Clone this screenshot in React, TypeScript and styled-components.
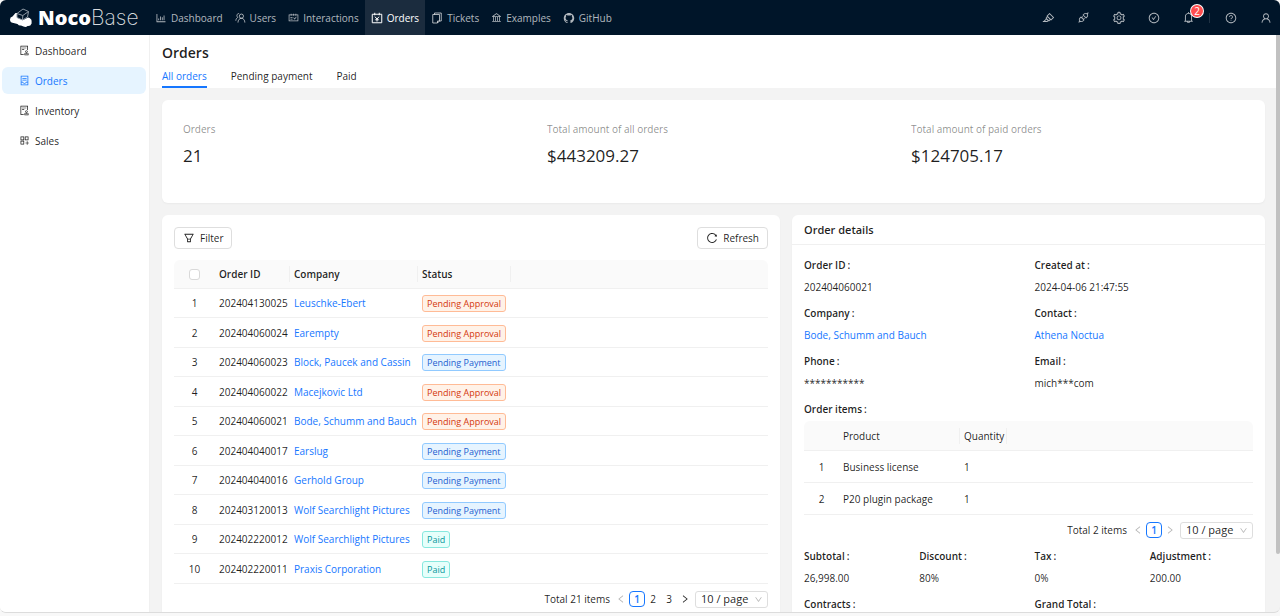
import React from 'react';
import styled, { createGlobalStyle, css } from 'styled-components';
import {
  AiOutlineBarChart,
  AiOutlineSchedule,
  AiOutlineBank,
  AiOutlineGithub,
  AiOutlineSetting,
  AiOutlineCheckCircle,
  AiOutlineBell,
  AiOutlineQuestionCircle,
  AiOutlineUser,
  AiOutlineHighlight,
  AiOutlineApi,
  AiOutlineFilter,
  AiOutlineReload,
  AiOutlineLeft,
  AiOutlineRight,
  AiOutlineDown,
  AiOutlineAudit,
  AiOutlineContainer,
  AiOutlineAppstoreAdd,
} from 'react-icons/ai';

const color = {
  navy: '#001529',
  blue: '#1677ff',
  text: 'rgba(0, 0, 0, 0.88)',
  muted: 'rgba(0, 0, 0, 0.45)',
  line: '#f0f0f0',
  border: '#dedede',
  page: '#f3f3f3',
  head: '#fafafa',
};

const GlobalStyle = createGlobalStyle`
  * { box-sizing: border-box; }
  body {
    margin: 0;
    background: #f8f8f8;
    color: ${color.text};
    font: 10px/18px "Open Sans", "Noto Sans", sans-serif;
  }
  button, select, input { font: inherit; color: inherit; }
  a { color: ${color.blue}; text-decoration: none; }
`;

const Window = styled.div`
  display: flex;
  flex-direction: column;
  height: calc(100vh - 3px);
  overflow: hidden;
  background: ${color.page};
  border-bottom: 1px solid #dcdcdc;
  border-radius: 6px;
`;

const TopBar = styled.header`
  flex: none;
  display: flex;
  align-items: stretch;
  height: 35px;
  background: ${color.navy};
`;

const Logo = styled.a`
  display: flex;
  align-items: center;
  gap: 5px;
  width: 149px;
  padding-left: 9px;
  color: #fff;
  font: 800 20px/24px "Open Sans", sans-serif;
  svg { flex: none; }
`;

const LogoThin = styled.span`
  font-family: Inter, "Open Sans", sans-serif;
  font-size: 21px;
  font-weight: 200;
  color: rgba(255, 255, 255, 0.85);
`;

const TopNav = styled.nav`
  display: flex;
`;

const TopLink = styled.a<{ $active?: boolean }>`
  display: flex;
  align-items: center;
  gap: 4px;
  padding: 0 6px;
  color: ${(p) => (p.$active ? '#fff' : 'rgba(255, 255, 255, 0.7)')};
  background: ${(p) => (p.$active ? '#1b2c3e' : 'transparent')};
`;

const Tools = styled.div`
  display: flex;
  align-items: center;
  gap: 6px;
  margin-left: auto;
`;

const ToolButton = styled.button`
  position: relative;
  display: grid;
  place-items: center;
  width: 29px;
  height: 24px;
  padding: 0;
  border: 0;
  background: none;
  color: rgba(255, 255, 255, 0.7);
`;

const ToolRule = styled.span`
  width: 1px;
  height: 10px;
  background: rgba(255, 255, 255, 0.12);
`;

const Count = styled.span`
  position: absolute;
  top: -1px;
  right: 0;
  width: 12px;
  height: 12px;
  border-radius: 6px;
  background: #ff4d4f;
  box-shadow: 0 0 0 1px #fff;
  color: #fff;
  line-height: 12px;
  text-align: center;
`;

const Body = styled.div`
  position: relative;
  flex: 1;
  display: flex;
  min-height: 0;
`;

const Side = styled.nav`
  flex: none;
  display: flex;
  flex-direction: column;
  gap: 3px;
  width: 149px;
  padding: 2px 3px 0 2px;
  background: #fff;
`;

const SideLink = styled.a<{ $active?: boolean }>`
  display: flex;
  align-items: center;
  gap: 5px;
  height: 27px;
  padding-left: 17px;
  border-radius: 6px;
  color: ${(p) => (p.$active ? color.blue : color.text)};
  background: ${(p) => (p.$active ? '#e6f4ff' : 'transparent')};
`;

const SalesIcon = styled(AiOutlineAppstoreAdd)`
  transform: scaleX(-1);
`;

const Main = styled.main`
  flex: 1;
  min-width: 0;
  overflow: hidden;
  border-left: 1px solid ${color.line};
`;

const ScrollThumb = styled.div`
  position: absolute;
  top: 0;
  right: 0;
  width: 4px;
  height: 90%;
  border-radius: 0 0 3px 3px;
  background: #c1c1c1;
`;

const PageHead = styled.div`
  padding: 6px 12px 0;
  background: #fff;
`;

const Title = styled.h1`
  margin: 0;
  font-size: 14px;
  line-height: 23px;
  font-weight: 600;
`;

const Tabs = styled.div`
  display: flex;
  gap: 24px;
`;

const Tab = styled.button<{ $active?: boolean }>`
  height: 24px;
  padding: 2px 0 0;
  border: 0;
  border-bottom: 2px solid ${(p) => (p.$active ? color.blue : 'transparent')};
  background: none;
  color: ${(p) => (p.$active ? color.blue : color.text)};
`;

const Content = styled.div`
  display: flex;
  flex-direction: column;
  gap: 12px;
  padding: 12px 15px 12px 12px;
`;

const Card = styled.section`
  border-radius: 6px;
  background: #fff;
  box-shadow: 0 1px 2px rgba(0, 0, 0, 0.04);
`;

const Stats = styled(Card)`
  display: grid;
  grid-template-columns: repeat(3, 1fr);
  gap: 10px;
  height: 103px;
  padding: 20px 0 0 21px;
`;

const StatLabel = styled.div`
  color: ${color.muted};
`;

const StatValue = styled.div`
  margin-top: 3px;
  font-size: 17px;
  line-height: 30px;
`;

const Columns = styled.div`
  display: grid;
  grid-template-columns: 618fr 473fr;
  align-items: start;
  gap: 12px;
`;

const ListCard = styled(Card)`
  padding: 12px;
`;

const Actions = styled.div`
  display: flex;
  justify-content: space-between;
  margin-bottom: 11px;
`;

const ActionButton = styled.button`
  display: flex;
  align-items: center;
  gap: 5px;
  height: 22px;
  padding: 0 8px;
  border: 1px solid ${color.border};
  border-radius: 4px;
  background: #fff;
`;

const DataTable = styled.table<{ $head: number; $odd: number; $even: number }>`
  width: 100%;
  border-collapse: separate;
  border-spacing: 0;
  table-layout: fixed;
  th, td {
    height: ${(p) => p.$odd}px;
    padding: 0 0 0 4px;
    border-bottom: 1px solid ${color.line};
    text-align: left;
    white-space: nowrap;
  }
  tr:nth-child(even) td { height: ${(p) => p.$even}px; }
  th { height: ${(p) => p.$head}px; background: ${color.head}; }
  th:first-child { border-top-left-radius: 6px; }
  th:last-child { border-top-right-radius: 6px; }
  th:first-child, td:first-child { padding: 0; text-align: center; }
`;

const HeadCell = styled.th<{ $width?: number; $rule?: boolean; $plain?: boolean }>`
  ${(p) => p.$width && css`width: ${p.$width}px;`}
  font-weight: ${(p) => (p.$plain ? 400 : 600)};
  ${(p) =>
    p.$rule &&
    css`
      background: linear-gradient(${color.line}, ${color.line}) right center / 1px 16px no-repeat ${color.head} !important;
    `}
`;

const Check = styled.input`
  display: block;
  appearance: none;
  width: 11px;
  height: 11px;
  margin: 0 auto;
  border: 1px solid #d9d9d9;
  border-radius: 3px;
  background: #fff;
`;

const tones = {
  'Pending Approval': ['#d4380d', '#fff2e8', '#ffbb96'],
  'Pending Payment': ['#1d5fd0', '#e6f4ff', '#91caff'],
  Paid: ['#08979c', '#e6fffb', '#87e8de'],
};
type Status = keyof typeof tones;

const Tag = styled.span<{ $status: Status }>`
  display: inline-block;
  padding: 0 4px;
  border: 1px solid ${(p) => tones[p.$status][2]};
  border-radius: 3px;
  background: ${(p) => tones[p.$status][1]};
  color: ${(p) => tones[p.$status][0]};
  font-size: 9px;
  line-height: 15px;
  vertical-align: middle;
`;

const Pager = styled.div`
  display: flex;
  align-items: center;
  justify-content: flex-end;
  height: 18px;
  margin-top: 6px;
`;

const PagerTotal = styled.span`
  margin-right: 3px;
`;

const PageButton = styled.button<{ $active?: boolean }>`
  display: grid;
  place-items: center;
  width: 16px;
  height: 16px;
  padding: 0;
  border: 1px solid ${(p) => (p.$active ? color.blue : 'transparent')};
  border-radius: 4px;
  background: none;
  color: ${(p) => (p.$active ? color.blue : color.text)};
  font-weight: ${(p) => (p.$active ? 600 : 400)};
  line-height: 14px;
  &:disabled { color: rgba(0, 0, 0, 0.3); }
`;

const SizeWrap = styled.label`
  display: grid;
  align-items: center;
  width: 73px;
  margin-left: 2px;
  svg {
    grid-area: 1 / 1;
    justify-self: end;
    margin-right: 5px;
    color: rgba(0, 0, 0, 0.3);
    pointer-events: none;
  }
`;

const SizeSelect = styled.select`
  grid-area: 1 / 1;
  appearance: none;
  width: 100%;
  height: 17px;
  padding: 0 5px 1px;
  border: 1px solid ${color.border};
  border-radius: 3px;
  background: #fff;
  font-size: 11px;
  line-height: 14px;
`;

const DetailTitle = styled.h2`
  margin: 0;
  padding: 0 12px;
  border-bottom: 1px solid ${color.line};
  font-size: 11px;
  line-height: 29px;
  font-weight: 600;
`;

const DetailBody = styled.div`
  display: flex;
  flex-direction: column;
  padding: 9px 12px 12px;
`;

const FieldGrid = styled.dl<{ $columns: number }>`
  display: grid;
  grid-template-columns: repeat(${(p) => p.$columns}, 1fr);
  column-gap: 12px;
  margin: 0;
`;

const FieldBox = styled.div`
  height: 48px;
  dt { line-height: 22px; font-weight: 600; }
  dd { margin: 0; line-height: 22px; }
`;

const Colon = styled.span`
  margin-left: 2px;
`;

const ItemsLabel = styled.h3`
  margin: 0;
  font-size: 10px;
  line-height: 23px;
  font-weight: 600;
`;

const ItemsPager = styled.div`
  margin-bottom: 6px;
`;

function LogoMark() {
  return (
    <svg width="24" height="20" viewBox="0 0 24 20">
      <path
        d="M1 11.5 Q1 9 3.5 8.5 L6.5 5 L8.5 5 L8 9.5 L14 12 L19 9.5 Q22.6 10.5 22.6 13 L22.6 15.5 Q21.5 18.5 18.5 18 Q17 19.5 14.5 18.5 L12 17.5 Q10 18 8.5 16 L2.5 14.5 Q0.8 13.5 1 11.5 Z"
        fill="#fff"
      />
      <path
        d="M8 5.5 L14 1 L19.5 3.5 L18.5 9 L13.5 12 L8 9.5 Z M8 5.5 L13.8 7.5 L19.5 3.5 M13.8 7.5 L13.5 12"
        fill="#001529"
        stroke="#8d98a3"
        strokeWidth="1"
        strokeLinejoin="round"
      />
    </svg>
  );
}

function UsersIcon() {
  return (
    <svg width="11" height="12" viewBox="0 0 24 24" fill="none" stroke="currentColor" strokeWidth="1.9">
      <circle cx="14" cy="8" r="4.6" />
      <path d="M6.5 22c0-5.5 3.2-9.4 7.5-9.4s7.5 3.9 7.5 9.4M9 2.2C4.5 2 2.5 7 6 10.8M6 10.8C3.5 12 2 14.5 1.8 18" />
    </svg>
  );
}

function OrdersIcon() {
  return (
    <svg width="12" height="12" viewBox="0 0 24 24" fill="none" stroke="currentColor" strokeWidth="2">
      <path d="M2.500 4.500h19v17h-19zM7.500 1.500v5M16.500 1.500v5M8 9.500l4 4.500 4-4.500M12 14v5M8.500 15.500h7" />
    </svg>
  );
}

function TicketsIcon() {
  return (
    <svg width="12" height="12" viewBox="0 0 24 24" fill="none" stroke="currentColor" strokeWidth="1.9">
      <path d="M7 5V2h13.500v16H17M3.500 5h13.500v13l-4 4h-9.500zM13 22v-4h4" />
    </svg>
  );
}

function Field({ label, children }: { label: string; children?: React.ReactNode }) {
  return (
    <FieldBox>
      <dt>{label}<Colon>:</Colon></dt>
      <dd>{children}</dd>
    </FieldBox>
  );
}

function Pagination({ total, pages }: { total: number; pages: number[] }) {
  return (
    <Pager>
      <PagerTotal>Total {total} items</PagerTotal>
      <PageButton disabled aria-label="Previous page"><AiOutlineLeft size={10} /></PageButton>
      {pages.map((n) => (
        <PageButton key={n} $active={n === 1}>{n}</PageButton>
      ))}
      <PageButton disabled={pages.length === 1} aria-label="Next page"><AiOutlineRight size={10} /></PageButton>
      <SizeWrap>
        <SizeSelect aria-label="Page size"><option>10 / page</option></SizeSelect>
        <AiOutlineDown size={9} />
      </SizeWrap>
    </Pager>
  );
}

const topLinks = [
  { label: 'Dashboard', icon: <AiOutlineBarChart size={12} /> },
  { label: 'Users', icon: <UsersIcon /> },
  { label: 'Interactions', icon: <AiOutlineSchedule size={11} /> },
  { label: 'Orders', icon: <OrdersIcon />, active: true },
  { label: 'Tickets', icon: <TicketsIcon /> },
  { label: 'Examples', icon: <AiOutlineBank size={11} /> },
  { label: 'GitHub', icon: <AiOutlineGithub size={12} /> },
];

const sideLinks = [
  { label: 'Dashboard', icon: <AiOutlineAudit size={11} /> },
  { label: 'Orders', icon: <AiOutlineContainer size={11} />, active: true },
  { label: 'Inventory', icon: <AiOutlineAudit size={11} /> },
  { label: 'Sales', icon: <SalesIcon size={11} /> },
];

const stats = [
  ['Orders', '21'],
  ['Total amount of all orders', '$443209.27'],
  ['Total amount of paid orders', '$124705.17'],
];

const orders: [string, string, Status][] = [
  ['202404130025', 'Leuschke-Ebert', 'Pending Approval'],
  ['202404060024', 'Earempty', 'Pending Approval'],
  ['202404060023', 'Block, Paucek and Cassin', 'Pending Payment'],
  ['202404060022', 'Macejkovic Ltd', 'Pending Approval'],
  ['202404060021', 'Bode, Schumm and Bauch', 'Pending Approval'],
  ['202404040017', 'Earslug', 'Pending Payment'],
  ['202404040016', 'Gerhold Group', 'Pending Payment'],
  ['202403120013', 'Wolf Searchlight Pictures', 'Pending Payment'],
  ['202402220012', 'Wolf Searchlight Pictures', 'Paid'],
  ['202402220011', 'Praxis Corporation', 'Paid'],
];

export default function App() {
  return (
    <>
      <GlobalStyle />
      <Window>
        <TopBar>
          <Logo href="#">
            <LogoMark />
            <span>Noco<LogoThin>Base</LogoThin></span>
          </Logo>
          <TopNav>
            {topLinks.map((l) => (
              <TopLink key={l.label} href="#" $active={l.active}>{l.icon}{l.label}</TopLink>
            ))}
          </TopNav>
          <Tools>
            <ToolButton aria-label="UI editor"><AiOutlineHighlight size={13} /></ToolButton>
            <ToolButton aria-label="Plugins"><AiOutlineApi size={13} /></ToolButton>
            <ToolButton aria-label="Settings"><AiOutlineSetting size={14} /></ToolButton>
            <ToolButton aria-label="Tasks"><AiOutlineCheckCircle size={12} /></ToolButton>
            <ToolButton aria-label="Notifications"><AiOutlineBell size={13} /><Count>2</Count></ToolButton>
            <ToolRule />
            <ToolButton aria-label="Help"><AiOutlineQuestionCircle size={12} /></ToolButton>
            <ToolButton aria-label="Account"><AiOutlineUser size={12} /></ToolButton>
          </Tools>
        </TopBar>
        <Body>
          <Side>
            {sideLinks.map((l) => (
              <SideLink key={l.label} href="#" $active={l.active}>{l.icon}{l.label}</SideLink>
            ))}
          </Side>
          <Main>
            <PageHead>
              <Title>Orders</Title>
              <Tabs>
                <Tab $active>All orders</Tab>
                <Tab>Pending payment</Tab>
                <Tab>Paid</Tab>
              </Tabs>
            </PageHead>
            <Content>
              <Stats>
                {stats.map(([label, value]) => (
                  <div key={label}>
                    <StatLabel>{label}</StatLabel>
                    <StatValue>{value}</StatValue>
                  </div>
                ))}
              </Stats>
              <Columns>
                <ListCard>
                  <Actions>
                    <ActionButton><AiOutlineFilter size={12} />Filter</ActionButton>
                    <ActionButton><AiOutlineReload size={12} />Refresh</ActionButton>
                  </Actions>
                  <DataTable $head={29} $odd={29} $even={30}>
                    <thead>
                      <tr>
                        <HeadCell $width={41}><Check type="checkbox" aria-label="Select all" /></HeadCell>
                        <HeadCell $width={75} $rule>Order ID</HeadCell>
                        <HeadCell $width={128} $rule>Company</HeadCell>
                        <HeadCell $width={93} $rule>Status</HeadCell>
                        <HeadCell />
                      </tr>
                    </thead>
                    <tbody>
                      {orders.map(([id, company, status], i) => (
                        <tr key={id}>
                          <td>{i + 1}</td>
                          <td>{id}</td>
                          <td><a href="#">{company}</a></td>
                          <td><Tag $status={status}>{status}</Tag></td>
                          <td />
                        </tr>
                      ))}
                    </tbody>
                  </DataTable>
                  <Pagination total={21} pages={[1, 2, 3]} />
                </ListCard>
                <Card>
                  <DetailTitle>Order details</DetailTitle>
                  <DetailBody>
                    <FieldGrid $columns={2}>
                      <Field label="Order ID">202404060021</Field>
                      <Field label="Created at">2024-04-06 21:47:55</Field>
                      <Field label="Company"><a href="#">Bode, Schumm and Bauch</a></Field>
                      <Field label="Contact"><a href="#">Athena Noctua</a></Field>
                      <Field label="Phone">***********</Field>
                      <Field label="Email">mich***com</Field>
                    </FieldGrid>
                    <ItemsLabel>Order items<Colon>:</Colon></ItemsLabel>
                    <DataTable $head={30} $odd={32} $even={32}>
                      <thead>
                        <tr>
                          <HeadCell $width={35} />
                          <HeadCell $width={121} $rule $plain>Product</HeadCell>
                          <HeadCell $width={47} $rule $plain>Quantity</HeadCell>
                          <HeadCell />
                        </tr>
                      </thead>
                      <tbody>
                        <tr><td>1</td><td>Business license</td><td>1</td><td /></tr>
                        <tr><td>2</td><td>P20 plugin package</td><td>1</td><td /></tr>
                      </tbody>
                    </DataTable>
                    <ItemsPager><Pagination total={2} pages={[1]} /></ItemsPager>
                    <FieldGrid $columns={4}>
                      <Field label="Subtotal">26,998.00</Field>
                      <Field label="Discount">80%</Field>
                      <Field label="Tax">0%</Field>
                      <Field label="Adjustment">200.00</Field>
                    </FieldGrid>
                    <FieldGrid $columns={2}>
                      <Field label="Contracts" />
                      <Field label="Grand Total" />
                    </FieldGrid>
                  </DetailBody>
                </Card>
              </Columns>
            </Content>
          </Main>
          <ScrollThumb />
        </Body>
      </Window>
    </>
  );
}
